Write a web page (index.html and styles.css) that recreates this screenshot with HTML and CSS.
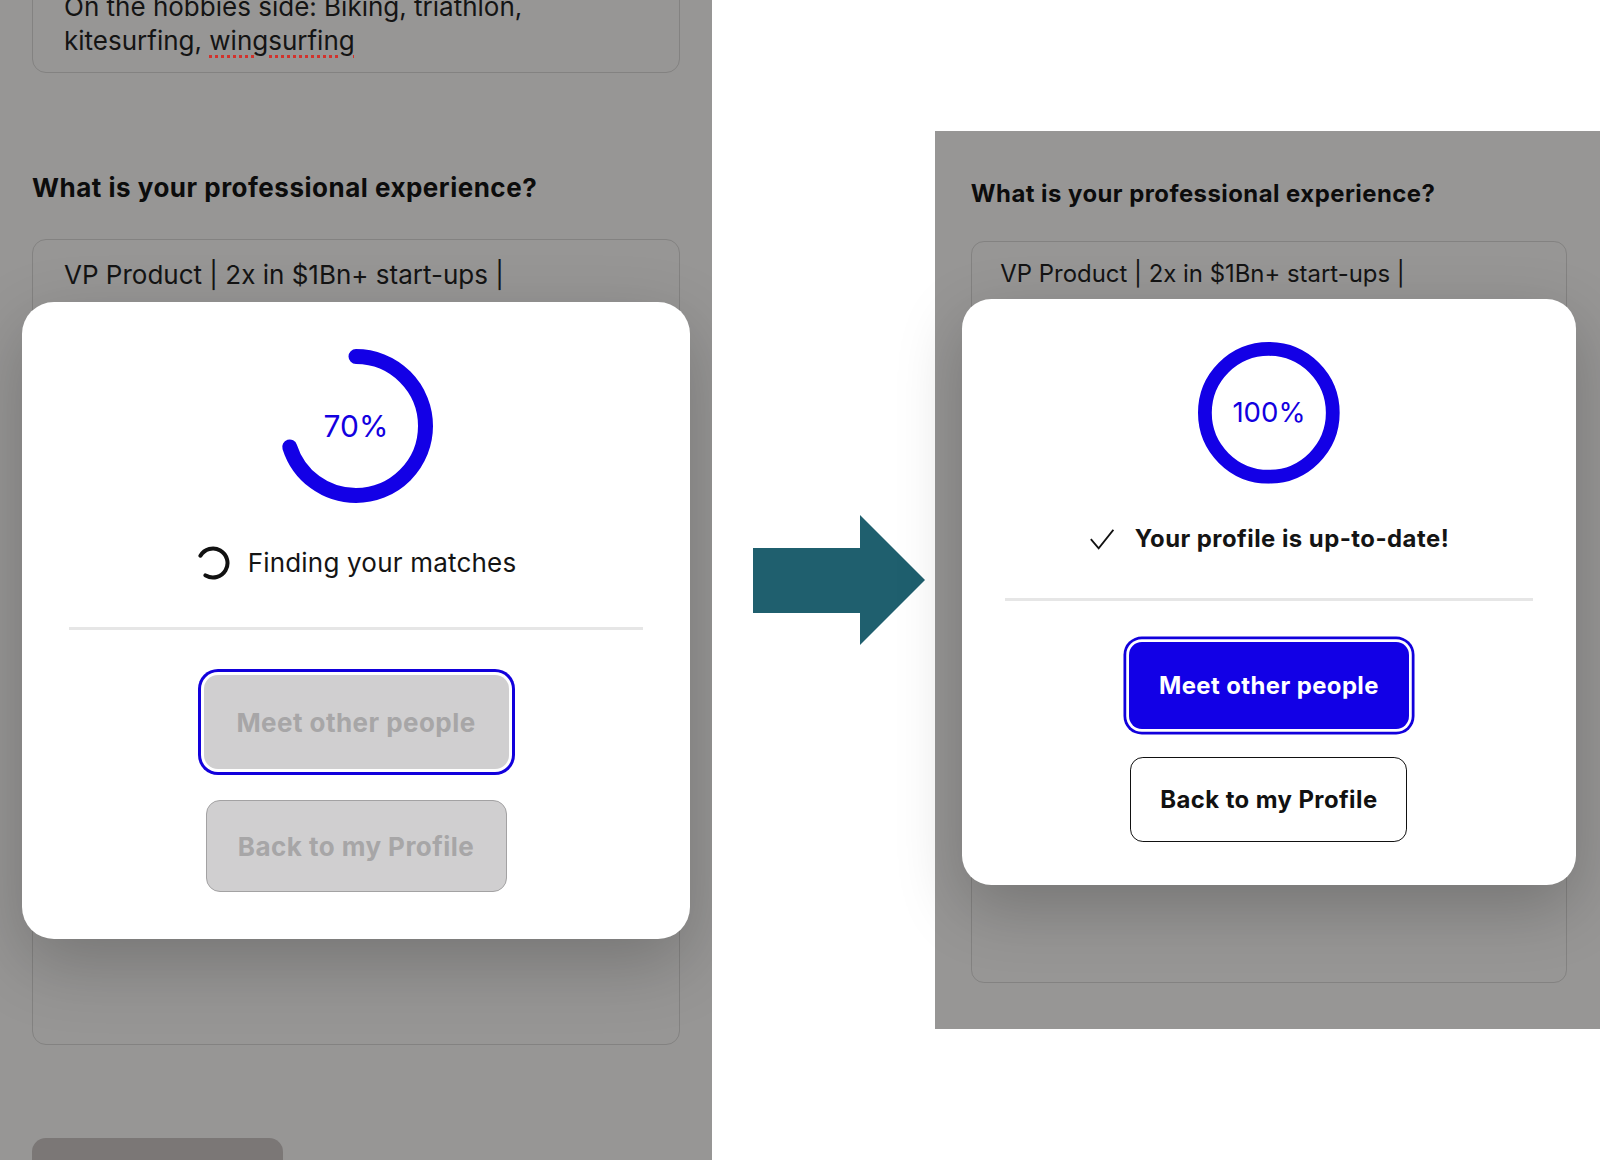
FILE: index.html
```html
<!DOCTYPE html>
<html>
<head>
    <title>Profile update – before and after</title>
    <link rel="stylesheet" href="styles.css">
</head>
<body>
    <main class="compare">
        <!-- Before: profile still being processed -->
        <section class="screen screen-before">
            <div class="field field-short">
                <p>On the hobbies side: Biking, triathlon,<br>kitesurfing, <span class="misspelt">wingsurfing</span></p>
            </div>
            <h2 class="question">What is your professional experience?</h2>
            <div class="field field-tall">
                <p>VP Product | 2x in $1Bn+ start-ups |</p>
                <div class="modal">
                    <div class="progress">
                        <svg class="ring" viewBox="0 0 154 154">
                            <circle class="ring-arc" cx="77" cy="77" r="69.5" stroke-dasharray="305.7 500"/>
                        </svg>
                        <span class="progress-value">70%</span>
                    </div>
                    <div class="status">
                        <svg class="spinner" viewBox="0 0 34 34">
                            <circle cx="17" cy="17" r="14.5" stroke-dasharray="68.3 100" transform="rotate(-150 17 17)"/>
                        </svg>
                        <span>Finding your matches</span>
                    </div>
                    <hr class="divider">
                    <div class="actions">
                        <button class="btn btn-primary is-focused" disabled>Meet other people</button>
                        <button class="btn btn-secondary" disabled>Back to my Profile</button>
                    </div>
                </div>
            </div>
            <div class="next-btn"></div>
        </section>

        <div class="arrow">
            <svg viewBox="0 0 172 130" width="172" height="130">
                <polygon points="0,33 107,33 107,0 172,65 107,130 107,98 0,98" fill="#1f5f6e"/>
            </svg>
        </div>

        <!-- After: profile processed -->
        <section class="screen screen-after">
            <h2 class="question">What is your professional experience?</h2>
            <div class="field field-tall">
                <p>VP Product | 2x in $1Bn+ start-ups |</p>
                <div class="modal">
                    <div class="progress">
                        <svg class="ring" viewBox="0 0 154 154">
                            <circle class="ring-arc" cx="77" cy="77" r="69.5"/>
                        </svg>
                        <span class="progress-value">100%</span>
                    </div>
                    <div class="status status-done">
                        <svg class="check" viewBox="0 0 28 24">
                            <polyline points="2,12 10.5,22 26.5,2"/>
                        </svg>
                        <span>Your profile is up-to-date!</span>
                    </div>
                    <hr class="divider">
                    <div class="actions">
                        <button class="btn btn-primary is-focused">Meet other people</button>
                        <button class="btn btn-secondary">Back to my Profile</button>
                    </div>
                </div>
            </div>
        </section>
    </main>
</body>
</html>
```

FILE: styles.css
```css
body {
    margin: 0;
    background: #fff;
    font-family: Inter, "Noto Sans", sans-serif;
    color: #111;
}

.compare {
    display: flex;
    align-items: center;
    height: 1160px;
    overflow: hidden;
}

/* Gray overlaid app screens */
.screen {
    background: #979695;
    box-sizing: border-box;
}

.screen-before {
    width: 712px;
    height: 1160px;
    padding: 0 32px 0 32px;
    overflow: hidden;
}

.screen-after {
    zoom: 0.92; /* second screenshot is slightly smaller */
    width: 723px;
    padding: 53px 36px 50px 39px;
}

.field {
    border: 1.5px solid #838281;
    border-radius: 14px;
    padding: 18px 31px;
    font-size: 26px;
    line-height: 34px;
    color: #141414;
}

.field p {
    margin: 0;
}

.field-short {
    margin-top: -29px;
    padding-bottom: 14px;
}

.misspelt {
    text-decoration: underline dotted #d3322c;
    text-decoration-thickness: 2.5px;
    text-underline-offset: 5px;
}

.question {
    margin: 100px 0 36px;
    font-size: 26px;
    line-height: 30px;
    font-weight: 700;
    letter-spacing: 0.5px;
    color: #0c0c0c;
}

.screen-after .question {
    margin-top: 0;
}

.field-tall {
    position: relative;
    height: 768px;
}

.next-btn {
    margin-top: 93px;
    width: 251px;
    height: 60px;
    border-radius: 14px;
    background: #7b7776;
}

/* Arrow between the two screens */
.arrow {
    width: 223px;
    box-sizing: border-box;
    padding-left: 41px;
    display: flex;
}

/* Modal */
.modal {
    position: absolute;
    top: 62px;
    left: -11px;
    width: 668px;
    box-sizing: border-box;
    padding: 47px 47px 47px;
    background: #fff;
    border-radius: 32px;
    box-shadow: 0 24px 70px rgba(0, 0, 0, 0.22);
    display: flex;
    flex-direction: column;
    align-items: center;
}

.progress {
    position: relative;
    width: 154px;
    height: 154px;
}

.ring {
    display: block;
    width: 154px;
    height: 154px;
    transform: rotate(-90deg);
}

.ring-arc {
    fill: none;
    stroke: #1300e6;
    stroke-width: 15;
    stroke-linecap: round;
}

.progress-value {
    position: absolute;
    inset: 0;
    display: flex;
    align-items: center;
    justify-content: center;
    font-size: 30px;
    color: #1300e0;
}

.status {
    margin-top: 43px;
    height: 34px;
    display: flex;
    align-items: center;
    gap: 18px;
    font-size: 26px;
    letter-spacing: 0.2px;
}

.status-done {
    gap: 22px;
    font-weight: 700;
    letter-spacing: 0.5px;
}

.spinner {
    width: 34px;
    height: 34px;
}

.spinner circle {
    fill: none;
    stroke: #111;
    stroke-width: 4;
    stroke-linecap: round;
}

.check {
    width: 28px;
    height: 24px;
}

.check polyline {
    fill: none;
    stroke: #111;
    stroke-width: 2;
}

.divider {
    align-self: stretch;
    margin: 47px 0 0;
    border: none;
    height: 3px;
    background: #e6e6e6;
}

.actions {
    margin-top: 45px;
    display: flex;
    flex-direction: column;
    align-items: center;
    gap: 31px;
}

.btn {
    width: 305px;
    height: 94px;
    box-sizing: border-box;
    border-radius: 14px;
    font-family: Inter, "Noto Sans", sans-serif;
    font-size: 26px;
    font-weight: 700;
    letter-spacing: 0.45px;
}

.btn-primary {
    border: none;
    background: #1200e6;
    color: #fff;
}

.btn-primary.is-focused {
    box-shadow: 0 0 0 3px #fff, 0 0 0 6px #1200dc;
}

.btn-secondary {
    width: 301px;
    height: 92px;
    border: 2px solid #111;
    background: #fff;
    color: #111;
}

.btn:disabled {
    background: #d0cfd0;
    color: #a7a6a7;
}

.btn-secondary:disabled {
    border: 1.5px solid #a3a2a3;
}
```
